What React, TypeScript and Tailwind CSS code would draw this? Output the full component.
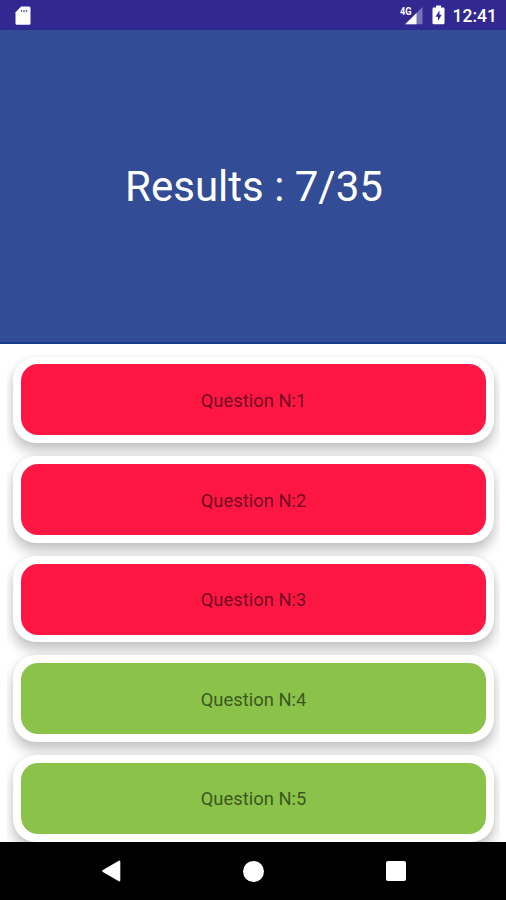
const questions = [
  { id: 1, correct: false },
  { id: 2, correct: false },
  { id: 3, correct: false },
  { id: 4, correct: true },
  { id: 5, correct: true },
];

function StatusBar() {
  return (
    <header className="flex h-[30px] shrink-0 items-center justify-between bg-[#312991] pl-[15px] pr-[9px] text-white">
      <svg width="16" height="20" viewBox="0 0 16 20" className="mt-px" fill="none">
        <path d="M6.2 0.5H14Q15.5 0.5 15.5 2V17.2Q15.5 18.7 14 18.7H2Q0.5 18.7 0.5 17.2V6.2Z" fill="white" />
        <path d="M6.5 4v2M9 4v2M11.5 4v2" stroke="#625caa" strokeWidth="1.3" />
      </svg>
      <div className="flex items-center">
        <svg width="23" height="20" viewBox="0 0 23 20">
          <path d="M22.5 2V19.3H5.2Z" fill="white" fillOpacity="0.35" />
          <path d="M16.5 8V19.3H5.2Z" fill="white" />
          <text x="0" y="9.5" fill="white" fontSize="10.5" fontWeight="700" fontFamily="Roboto, sans-serif" textLength="11.5" lengthAdjust="spacingAndGlyphs">4G</text>
        </svg>
        <svg width="13" height="20" viewBox="0 0 13 20" className="ml-[9px]">
          <path d="M4 0.5H9V2.5H11.3Q12.5 2.5 12.5 3.7V18Q12.5 19.2 11.3 19.2H1.7Q0.5 19.2 0.5 18V3.7Q0.5 2.5 1.7 2.5H4Z" fill="white" />
          <path d="M7.5 5.5L3.5 11.8H6V16L9.7 9.8H7.5Z" fill="#312991" />
        </svg>
        <span className="ml-[8px] mt-[2px] text-[17.5px] font-medium leading-5">12:41</span>
      </div>
    </header>
  );
}

function QuestionCard({ id, correct }: { id: number; correct: boolean }) {
  return (
    <li className="h-[86.6px] shrink-0 rounded-[23px] bg-white px-2 py-[7.8px] shadow-[0_8px_12px_1px_rgba(0,0,0,0.21),0_0_5px_rgba(0,0,0,0.06)]">
      <div className={`flex h-full items-center justify-center rounded-[17px] text-[18.4px] ${correct ? "bg-[#8bc34a] text-[#3c5820]" : "bg-[#ff1744] text-[#730a20]"}`}>
        <span className="pt-[2px]">Question N:{id}</span>
      </div>
    </li>
  );
}

function NavigationBar() {
  return (
    <nav className="flex h-[58px] shrink-0 items-center justify-between bg-black pl-[102px] pr-[100px]">
      <svg width="19" height="22" viewBox="0 0 19 22" fill="white">
        <path d="M16.8 0.8Q18.3 0 18.3 1.7V20.3Q18.3 22 16.8 21.2L0.9 12.1Q-0.5 11 0.9 9.9Z" />
      </svg>
      <span className="size-[21px] rounded-full bg-white" />
      <span className="size-5 rounded-[2px] bg-white" />
    </nav>
  );
}

export default function App() {
  return (
    <div className="flex h-[900px] w-[506px] flex-col overflow-hidden bg-white font-['Roboto',sans-serif]">
      <StatusBar />
      <section className="flex h-[314px] shrink-0 items-center justify-center border-b-2 border-[#173b8b] bg-[#334c96] pl-[2px] pt-px">
        <h1 className="text-[42px] text-white">Results : 7/35</h1>
      </section>
      <main className="min-h-0 flex-1 overflow-hidden pl-[7px] pr-[6px]">
        <ul className="flex h-full flex-col gap-[13px] overflow-hidden px-[6px] pt-[12.6px]">
          {questions.map((question) => (
            <QuestionCard key={question.id} {...question} />
          ))}
        </ul>
      </main>
      <NavigationBar />
    </div>
  );
}
